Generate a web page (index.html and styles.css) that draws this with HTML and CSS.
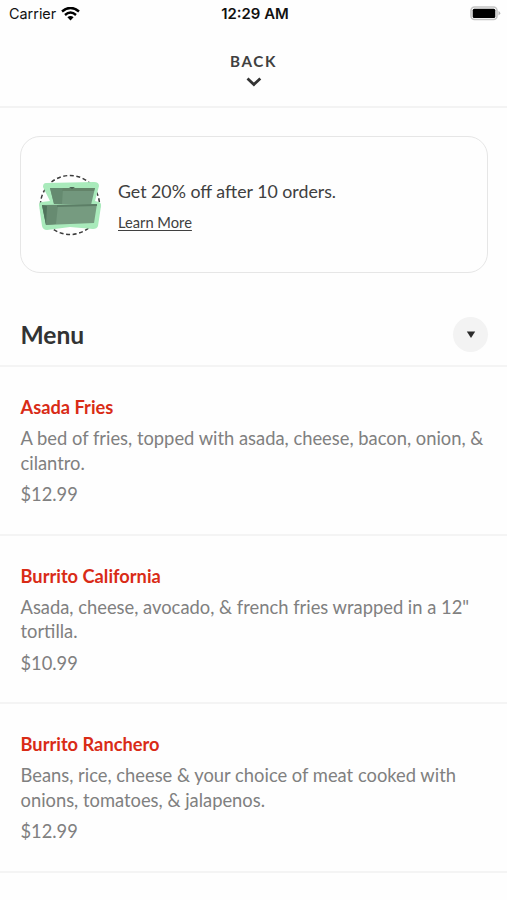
FILE: index.html
```html
<!DOCTYPE html>
<html lang="en">
<head>
<meta charset="utf-8">
<title>Menu</title>
<link rel="stylesheet" href="styles.css">
</head>
<body>
<div class="status">
  <div class="carrier"><span>Carrier</span>
    <svg width="19" height="14" viewBox="0 0 19 14"><g fill="none" stroke="#000" stroke-width="2.4"><path d="M1 4.500Q9.500-2.700 18 4.500M4 8Q9.500 3.200 15 8"/></g><path d="M6.400 10.200Q9.500 7.800 12.600 10.200L9.500 13.400Z"/></svg>
  </div>
  <div class="time">12:29 AM</div>
  <svg class="battery" width="31" height="15" viewBox="0 0 31 15"><rect x="1" y="1" width="26" height="12.500" rx="3.500" fill="none" stroke="#c4c4c4" stroke-width="1.6"/><rect x="2.700" y="2.700" width="22.600" height="9.200" rx="1.500"/><path d="M28.500 5Q32 7.200 28.500 9.400Z" fill="#b5b5b5"/></svg>
</div>
<header class="back"><span>BACK</span>
  <svg width="16" height="10" viewBox="0 0 16 10"><path d="M1.500 1.500L7.900 7.500L14.300 1.500" fill="none" stroke="#333" stroke-width="2.800"/></svg>
</header>
<section class="promo">
  <svg class="boxes" width="66" height="66" viewBox="0 0 66 66">
    <circle cx="33" cy="33" r="29.500" fill="none" stroke="#3c3c3c" stroke-width="1.500" stroke-dasharray="4 2.600"/>
    <path d="M9 11L57 10Q62 10 62 14L58 29L62 30Q64.500 31 64 34L61 54Q60 57 56 57L33 55L10 58Q6 58 5 54L2 33Q2 30 5 30L13 29L6 15Q6 11 9 11Z" fill="#a9eabb"/>
    <path d="M13 16L58 16L54 33L17 32Z" fill="#72977d"/>
    <path d="M13 16L26 16L25 32L17 32Z" fill="#658a70"/>
    <path d="M26 16L58 16L57 19L25 19Z" fill="#638369"/>
    <path d="M32 15L38 15L35 17Z" fill="#496352"/>
    <path d="M5 33L60 32L57 51L9 53Z" fill="#769b80"/>
    <path d="M5 33L21 33L19 52L9 53Z" fill="#678b71"/>
    <path d="M5 33L10 34L9 53Z" fill="#50745c"/>
    <path d="M20 33L60 32V34L20 35Z" fill="#5c7e66"/>
  </svg>
  <div class="offer"><p>Get 20% off after 10 orders.</p><a>Learn More</a></div>
</section>
<div class="heading"><h1>Menu</h1><button aria-label="Select menu"><svg width="10" height="8" viewBox="0 0 10 8"><path d="M.8 1.400H9.200L5 8Z" fill="#2b2b2b"/></svg></button></div>
<main>
  <article><h2>Asada Fries</h2><p>A bed of fries, topped with asada, cheese, bacon, onion, &amp; cilantro.</p><div class="price">$12.99</div></article>
  <article><h2>Burrito California</h2><p>Asada, cheese, avocado, &amp; french fries wrapped in a 12" tortilla.</p><div class="price">$10.99</div></article>
  <article><h2>Burrito Ranchero</h2><p>Beans, rice, cheese &amp; your choice of meat cooked with onions, tomatoes, &amp; jalapenos.</p><div class="price">$12.99</div></article>
</main>
</body>
</html>
```
FILE: styles.css
```css
* { box-sizing: border-box; }
body { margin: 0; background: #fefefe; font-family: Lato, sans-serif; color: #404040; height: 900px; overflow: hidden; }
h1, h2, p { margin: 0; }
svg { display: block; }
.status { height: 27px; padding: 0 6px 0 9px; display: grid; grid-template-columns: 1fr auto 1fr; align-items: center; font-family: Inter, sans-serif; font-size: 14.400px; color: #111; }
.carrier { display: flex; align-items: center; gap: 5px; }
.time { font-weight: 600; font-size: 14.900px; }
.battery { justify-self: end; }
.back { height: 81px; border-bottom: 2px solid #f3f3f3; display: flex; flex-direction: column; align-items: center; padding-top: 24px; gap: 6px; font-size: 15.200px; line-height: 20px; font-weight: 700; letter-spacing: 1.600px; }
.promo { margin: 28px 19px 0 20px; height: 137px; border: 1.500px solid #e6e6e6; border-radius: 20px; display: flex; align-items: center; padding-left: 16px; gap: 15px; }
.offer { padding-top: 2px; }
.offer p { font-size: 17.750px; line-height: 24px; }
.offer a { display: block; margin-top: 8px; font-size: 14.700px; line-height: 22px; text-decoration: underline; text-underline-offset: 2px; }
.heading { height: 94px; padding: 30px 19px 0 20.500px; border-bottom: 2px solid #f4f4f4; display: flex; align-items: center; justify-content: space-between; }
h1 { font-size: 24.600px; font-weight: 700; color: #333; }
button { width: 35px; height: 35px; border: 0; border-radius: 50%; background: #f3f3f3; padding: 0; display: grid; place-items: center; }
article { height: 168.500px; border-bottom: 2px solid #f4f4f4; padding: 28px 16px 0 20.500px; }
h2 { font-size: 18.250px; line-height: 24px; font-weight: 700; color: #d92b16; }
article p { margin-top: 7.300px; font-size: 18.350px; line-height: 24.500px; color: #808080; }
.price { margin-top: 7.200px; font-size: 18.300px; line-height: 25px; color: #808080; }
```
